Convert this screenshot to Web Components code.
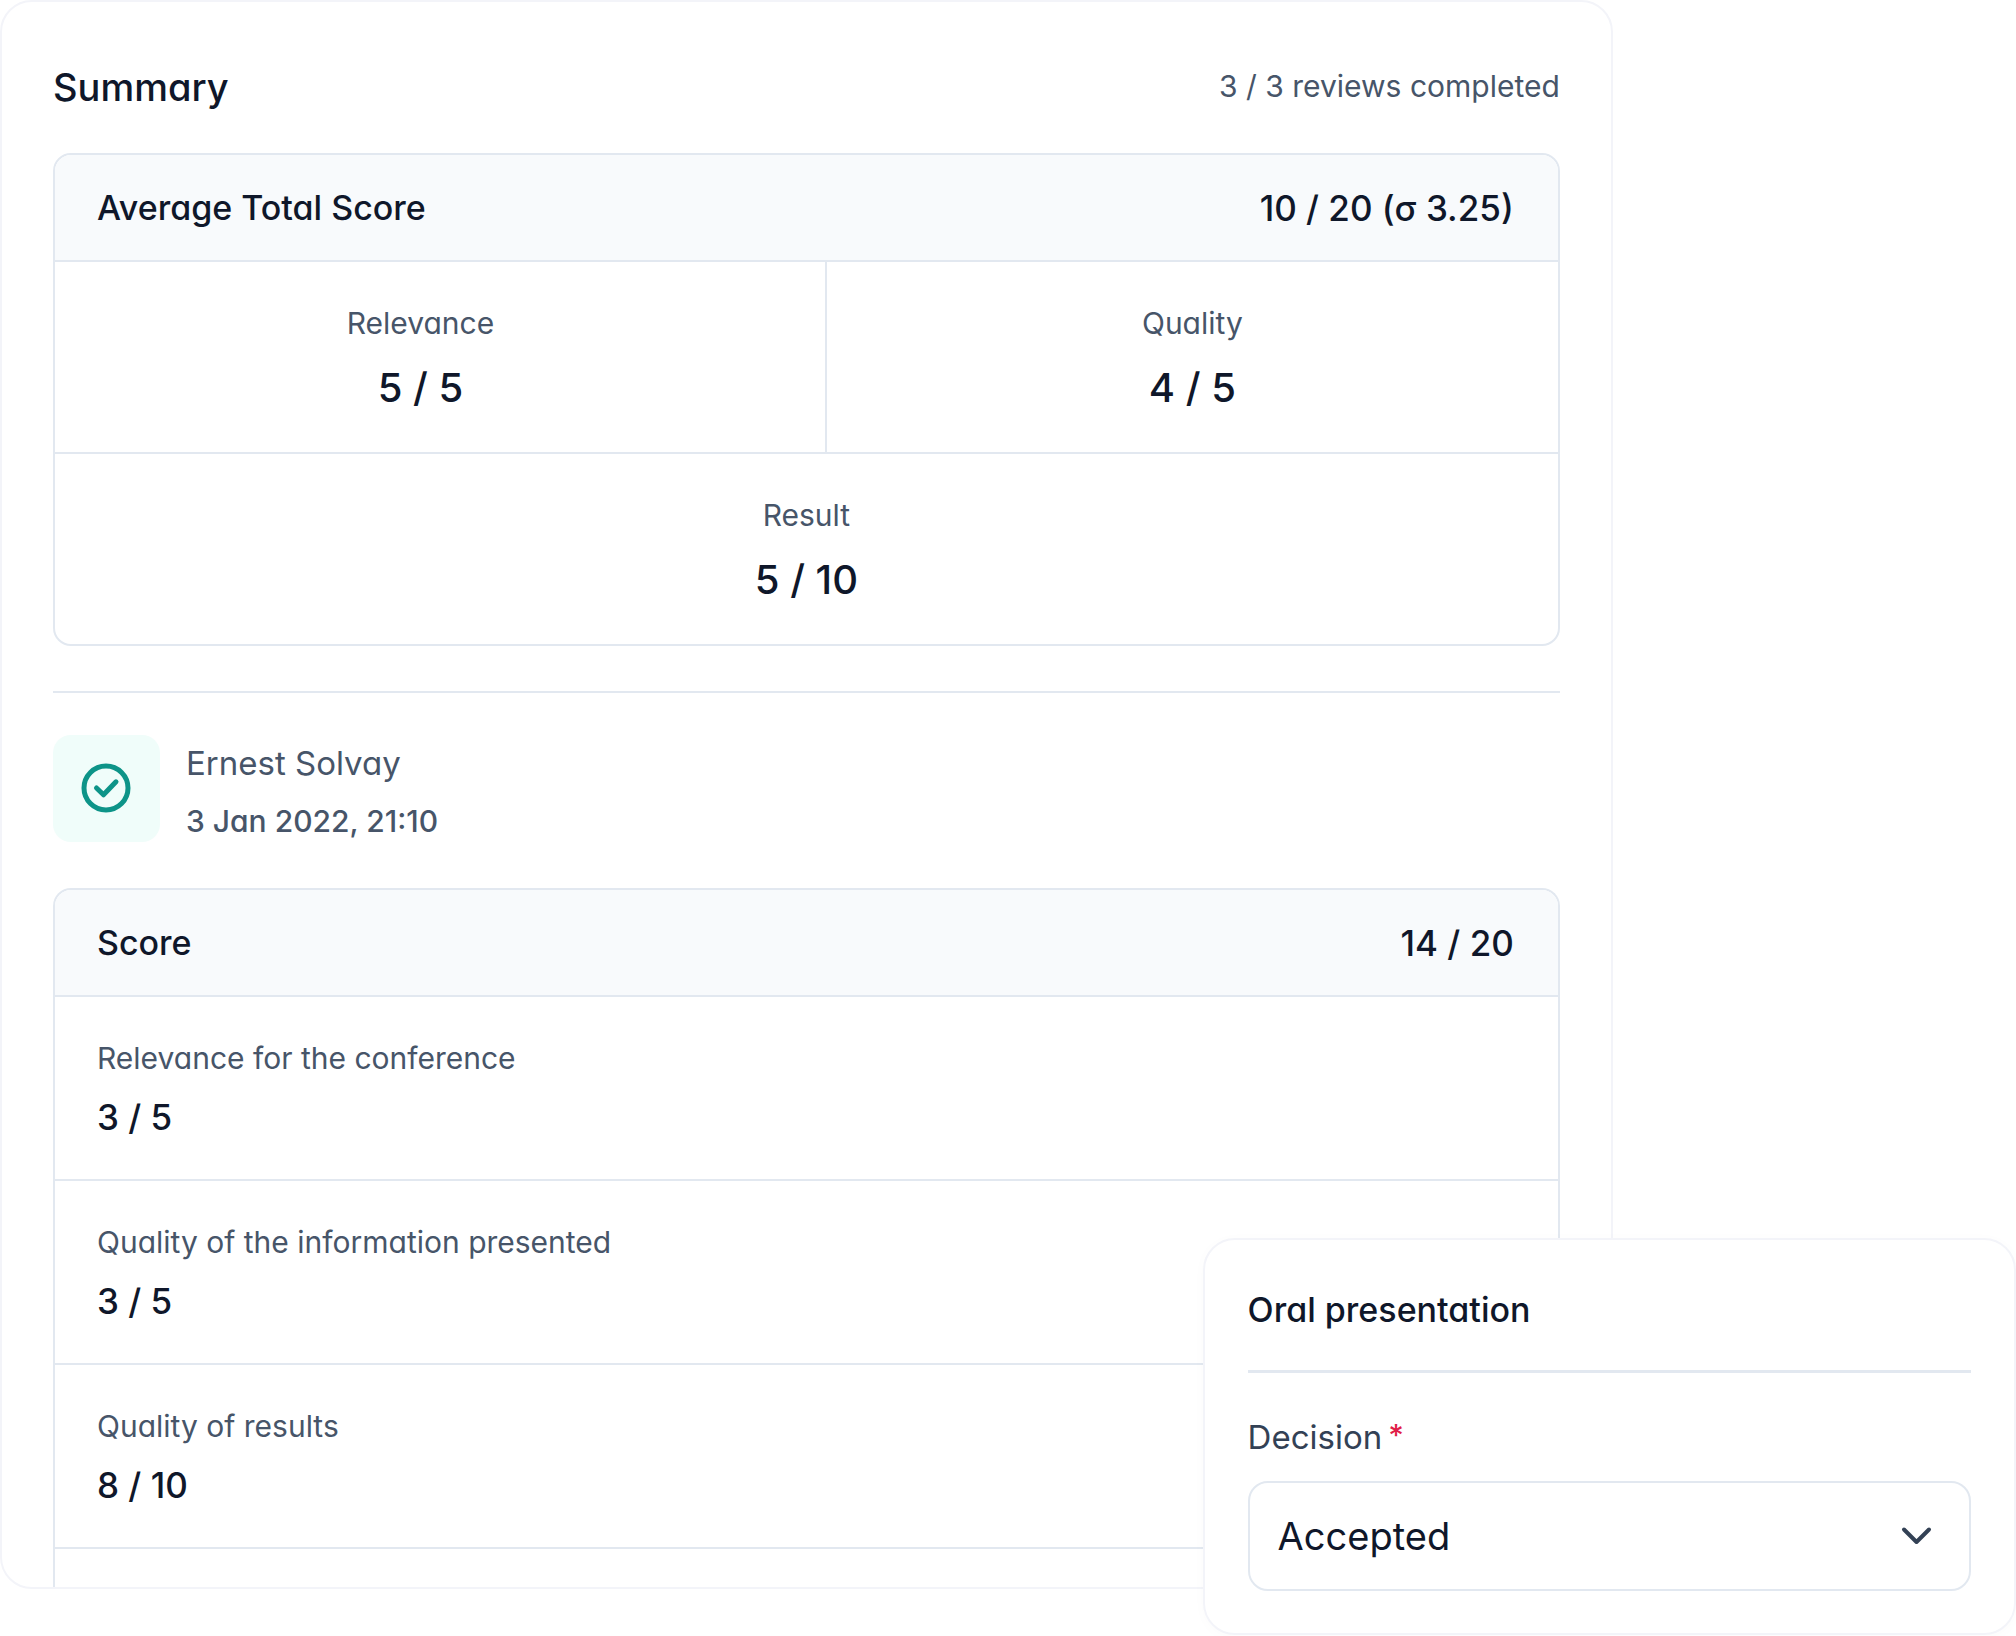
<!DOCTYPE html>
<html lang="en">
<head>
<meta charset="utf-8">
<meta name="viewport" content="width=device-width, initial-scale=1">
<title>Review summary</title>
<style>
  :root {
    --ink: #0f172a;
    --ink-soft: #475569;
    --ink-label: #334155;
    --line: #e2e8f0;
    --line-faint: #f3f4f9;
    --surface: #ffffff;
    --surface-head: #f8fafc;
    --text-s: 30px;
    --text-name: 33px;
    --text-m: 34px;
    --text-l: 38px;
    --number-m: 35px;
    --number-l: 40px;
  }
  body {
    margin: 0;
    background: var(--surface);
    color: var(--ink);
    font-family: Inter, "Liberation Sans", sans-serif;
    font-feature-settings: "cv11";
    font-weight: 450;
  }
</style>
</head>
<body>
<review-page>
  <summary-panel heading="Summary" status="3 / 3 reviews completed">
    <score-table heading="Average Total Score" total="10 / 20 (σ 3.25)">
      <score-row>
        <score-cell label="Relevance" value="5 / 5" centered divided></score-cell>
        <score-cell label="Quality" value="4 / 5" centered></score-cell>
      </score-row>
      <score-row last>
        <score-cell label="Result" value="5 / 10" centered></score-cell>
      </score-row>
    </score-table>
    <reviewer-line name="Ernest Solvay" date="3 Jan 2022, 21:10"></reviewer-line>
    <score-table heading="Score" total="14 / 20" open-ended>
      <score-row><score-cell label="Relevance for the conference" value="3 / 5"></score-cell></score-row>
      <score-row><score-cell label="Quality of the information presented" value="3 / 5"></score-cell></score-row>
      <score-row><score-cell label="Quality of results" value="8 / 10"></score-cell></score-row>
    </score-table>
  </summary-panel>
  <decision-card slot="overlay" heading="Oral presentation" label="Decision"></decision-card>
</review-page>

<script>
class BaseElement extends HTMLElement {
  connectedCallback() {
    if (this.shadowRoot) return;
    this.attachShadow({ mode: "open" }).innerHTML = this.render();
  }
  attr(name) { return this.getAttribute(name) || ""; }
}

customElements.define("review-page", class extends BaseElement {
  render() {
    return `
      <style>
        :host { display: block; }
        main { position: relative; box-sizing: border-box; height: 100vh; padding-bottom: 47px; display: flex; align-items: stretch; }
        ::slotted([slot="overlay"]) { position: absolute; right: 0; bottom: 1px; width: calc(40% + 7px); }
      </style>
      <main><slot></slot><slot name="overlay"></slot></main>`;
  }
});

customElements.define("summary-panel", class extends BaseElement {
  render() {
    return `
      <style>
        :host { display: flex; flex-direction: column; box-sizing: border-box; width: 80%; overflow: hidden;
          padding: 57px 51px 0; border: 2px solid var(--line-faint); border-radius: 32px; background: var(--surface); }
        header { display: flex; justify-content: space-between; align-items: flex-start; flex: none; margin-bottom: 38px; }
        h1 { margin: 0; font-size: var(--text-l); line-height: 56px; font-weight: 450; }
        p { margin: 0; font-size: var(--text-s); line-height: 54px; font-weight: 400; color: var(--ink-soft); }
      </style>
      <header><h1>${this.attr("heading")}</h1><p>${this.attr("status")}</p></header>
      <slot></slot>`;
  }
});

customElements.define("score-table", class extends BaseElement {
  render() {
    return `
      <style>
        :host { display: block; flex: none; overflow: hidden; border: 2px solid var(--line); border-radius: 18px; }
        :host([open-ended]) { flex: 1; border-bottom: 0; border-radius: 18px 18px 0 0; }
        header { display: flex; justify-content: space-between; align-items: center; height: 105px; padding: 0 44px 0 42px;
          background: var(--surface-head); border-bottom: 2px solid var(--line); font-size: var(--text-m); line-height: 52px; }
        h2 { margin: 0; font: inherit; }
        span { font-size: var(--number-m); }
      </style>
      <header><h2>${this.attr("heading")}</h2><span>${this.attr("total")}</span></header>
      <slot></slot>`;
  }
});

customElements.define("score-row", class extends BaseElement {
  render() {
    return `
      <style>
        :host { display: flex; border-bottom: 2px solid var(--line); }
        :host([last]) { border-bottom: 0; }
      </style>
      <slot></slot>`;
  }
});

customElements.define("score-cell", class extends BaseElement {
  render() {
    return `
      <style>
        :host { display: block; flex: 1; }
        :host([divided]) { padding-right: 39px; border-right: 2px solid var(--line); }
        dl { display: flex; flex-direction: column; gap: 9px; margin: 0; padding: 37px 42px 36px; }
        dt { font-size: var(--text-s); line-height: 48px; font-weight: 400; color: var(--ink-soft); }
        dd { margin: 0; font-size: var(--number-m); line-height: 52px; }
        :host([centered]) dl { gap: 13px; padding: 37px 0 36px; text-align: center; }
        :host([centered]) dd { font-size: var(--number-l); line-height: 56px; }
      </style>
      <dl><dt>${this.attr("label")}</dt><dd>${this.attr("value")}</dd></dl>`;
  }
});

customElements.define("reviewer-line", class extends BaseElement {
  render() {
    return `
      <style>
        :host { display: flex; flex: none; gap: 26px; margin: 45px 0 43px; padding-top: 42px; border-top: 2px solid var(--line); }
        .badge { display: grid; place-items: center; flex: none; width: 107px; height: 107px; border-radius: 18px; background: #f0fdfa; color: #0d9488; }
        .who { display: flex; flex-direction: column; gap: 8px; padding-top: 2px; }
        strong { font-size: var(--text-name); line-height: 52px; font-weight: 400; color: var(--ink-soft); }
        time { font-size: var(--text-s); line-height: 48px; color: var(--ink-soft); }
      </style>
      <span class="badge">
        <svg width="53" height="53" viewBox="0 0 53 53" fill="none" stroke="currentColor" stroke-width="5" stroke-linecap="round" stroke-linejoin="round" aria-hidden="true">
          <circle cx="26" cy="26" r="22"/><path d="M16.5 26l7 6.8L36 19.8"/>
        </svg>
      </span>
      <div class="who"><strong>${this.attr("name")}</strong><time datetime="2022-01-03T21:10">${this.attr("date")}</time></div>`;
  }
});

customElements.define("decision-card", class extends BaseElement {
  render() {
    return `
      <style>
        :host { display: block; box-sizing: border-box; padding: 44px 43px 42px; border: 2px solid var(--line-faint); border-radius: 32px;
          background: var(--surface); box-shadow: 0 2px 14px rgba(15, 23, 42, 0.02); }
        h2 { margin: 0; font-size: var(--text-m); line-height: 52px; font-weight: 500; }
        hr { height: 3px; margin: 34px 0 38px; border: 0; background: var(--line); }
        label { display: flex; gap: 6px; margin-bottom: 18px; font-size: var(--text-name); line-height: 52px; font-weight: 400; color: var(--ink-label); }
        label span { font-size: var(--text-s); line-height: 48px; font-weight: 500; color: #e11d48; }
        .field { display: grid; align-items: center; }
        .field > * { grid-area: 1 / 1; }
        select { appearance: none; box-sizing: border-box; width: 100%; height: 110px; margin: 0; padding: 0 96px 0 28px;
          border: 2px solid var(--line); border-radius: 20px; background: var(--surface); color: var(--ink);
          font: inherit; font-weight: 400; font-size: var(--text-l); line-height: 56px; font-feature-settings: inherit; }
        svg { justify-self: end; margin-right: 37px; pointer-events: none; color: var(--ink-label); }
      </style>
      <h2>${this.attr("heading")}</h2>
      <hr>
      <label for="decision">${this.attr("label")}<span>*</span></label>
      <div class="field">
        <select id="decision" required><option>Accepted</option></select>
        <svg width="36" height="36" viewBox="0 0 36 36" fill="none" stroke="currentColor" stroke-width="4" stroke-linecap="round" stroke-linejoin="round" aria-hidden="true"><path d="M6 11.500l12.500 12.500 12.500-12.500"/></svg>
      </div>`;
  }
});
</script>
</body>
</html>
